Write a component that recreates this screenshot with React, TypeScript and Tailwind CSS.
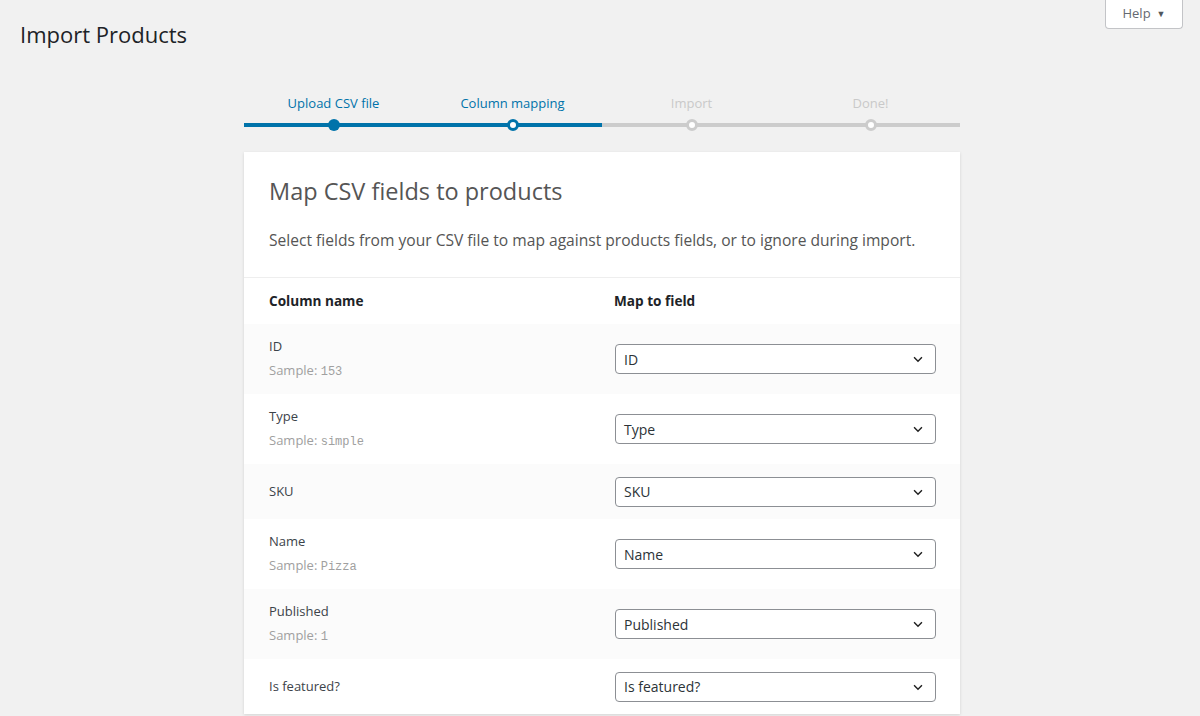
import React from 'react';

const steps = [
  { label: 'Upload CSV file', state: 'done' },
  { label: 'Column mapping', state: 'active' },
  { label: 'Import', state: 'todo' },
  { label: 'Done!', state: 'todo' },
];

const rows = [
  { name: 'ID', sample: '153', field: 'ID' },
  { name: 'Type', sample: 'simple', field: 'Type' },
  { name: 'SKU', sample: null, field: 'SKU' },
  { name: 'Name', sample: 'Pizza', field: 'Name' },
  { name: 'Published', sample: '1', field: 'Published' },
  { name: 'Is featured?', sample: null, field: 'Is featured?' },
];

function Chevron() {
  return (
    <svg width="14" height="14" viewBox="0 0 16 16" fill="none" stroke="#1e1e1e" strokeWidth="1.6">
      <path d="M3.5 6l4.5 4.5L12.5 6" />
    </svg>
  );
}

export default function App() {
  return (
    <div className="min-h-[716px] bg-[#f1f1f1] font-['Open_Sans',sans-serif] text-[#3c434a] relative">
      {/* Help tab */}
      <button className="absolute right-[17px] top-0 h-[29px] w-[78px] bg-white border border-[#c3c4c7] border-t-0 rounded-b-[4px] text-[13px] text-[#646970] flex items-center justify-center gap-1.5">
        Help <span className="text-[9px] text-[#50575e]">▼</span>
      </button>

      <h1 className="pt-[19px] pl-[20px] text-[22px] font-normal text-[#1d2327] leading-[30px]">Import Products</h1>

      <div className="w-[716px] ml-[244px] mt-[45px]">
        {/* Steps */}
        <div className="grid grid-cols-4">
          {steps.map((s) => (
            <div key={s.label} className="flex flex-col items-center">
              <span
                className={`text-[13px] leading-[18px] ${s.state === 'todo' ? 'text-[#c9c9c9]' : 'text-[#0073aa]'}`}
              >
                {s.label}
              </span>
              <div className="relative w-full h-[4px] mt-[11px]">
                <div className={`absolute inset-0 ${s.state === 'todo' ? 'bg-[#cccccc]' : 'bg-[#0073aa]'}`} />
                {s.state === 'done' && (
                  <div className="absolute left-1/2 top-1/2 -translate-x-1/2 -translate-y-1/2 w-[12px] h-[12px] rounded-full bg-[#0073aa]" />
                )}
                {s.state === 'active' && (
                  <div className="absolute left-1/2 top-1/2 -translate-x-1/2 -translate-y-1/2 w-[12px] h-[12px] rounded-full bg-white border-[3px] border-[#0073aa]" />
                )}
                {s.state === 'todo' && (
                  <div className="absolute left-1/2 top-1/2 -translate-x-1/2 -translate-y-1/2 w-[12px] h-[12px] rounded-full bg-white border-[3px] border-[#cccccc]" />
                )}
              </div>
            </div>
          ))}
        </div>

        {/* Card */}
        <div className="mt-[25px] bg-white shadow-[0_1px_3px_rgba(0,0,0,0.13)]">
          <div className="px-[25px] pt-[24px] pb-[25px] border-b border-[#eeeeee]">
            <h2 className="text-[23.5px] leading-[30px] text-[#555555] font-normal">Map CSV fields to products</h2>
            <p className="mt-[22px] text-[15.6px] leading-[24px] text-[#555555]">
              Select fields from your CSV file to map against products fields, or to ignore during import.
            </p>
          </div>

          <div className="grid grid-cols-[345px_1fr] px-[25px] h-[46px] items-center text-[13.6px] font-bold text-[#1d2327]">
            <div>Column name</div>
            <div>Map to field</div>
          </div>

          {rows.map((r, i) => (
            <div
              key={r.name}
              className={`grid grid-cols-[346px_1fr] items-center px-[25px] ${i % 2 === 0 ? 'bg-[#fbfbfb]' : 'bg-white'} ${r.sample ? 'h-[70px]' : 'h-[55px]'}`}
            >
              <div className="text-[13px] text-[#3c434a]">
                <div className="leading-[19px]">{r.name}</div>
                {r.sample && (
                  <div className="mt-[5px] leading-[19px] text-[#a0a0a0]">
                    Sample: <code className="font-['Liberation_Mono',monospace] text-[12px]">{r.sample}</code>
                  </div>
                )}
              </div>
              <div className="w-[321px] h-[30px] border border-[#8c8f94] rounded-[4px] bg-white flex items-center justify-between pl-[8px] pr-[10px] text-[14px] text-[#2c3338]">
                <span>{r.field}</span>
                <Chevron />
              </div>
            </div>
          ))}
        </div>
      </div>
    </div>
  );
}
